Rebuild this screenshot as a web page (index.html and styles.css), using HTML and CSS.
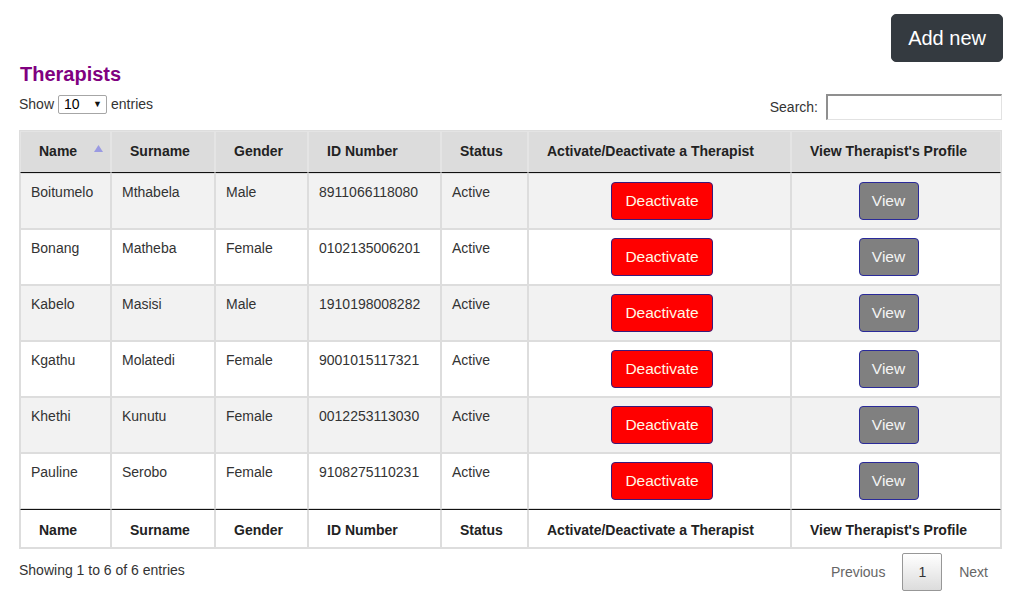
FILE: index.html
```html
<!DOCTYPE html>
<html lang="en">
<head>
<meta charset="utf-8">
<title>Therapists</title>
<link rel="stylesheet" href="styles.css">
</head>
<body>
<div class="page">
  <div class="topbar">
    <button class="btn-add">Add new</button>
  </div>
  <h2 class="title">Therapists</h2>
  <div class="controls">
    <div class="length">
      <span>Show</span>
      <span class="select"><span>10</span><span class="caret">&#9660;</span></span>
      <span>entries</span>
    </div>
    <div class="search">
      <label>Search:</label>
      <input type="text" class="search-input">
    </div>
  </div>
  <table class="grid">
    <colgroup>
      <col class="c1"><col class="c2"><col class="c3"><col class="c4"><col class="c5"><col class="c6"><col class="c7">
    </colgroup>
    <thead>
      <tr>
        <th class="sorted">Name<svg class="sort" width="9" height="8" viewBox="0 0 9 8"><polygon points="4.5,0 9,7 0,7" fill="#9a9ae2"/></svg></th>
        <th>Surname</th>
        <th>Gender</th>
        <th>ID Number</th>
        <th>Status</th>
        <th>Activate/Deactivate a Therapist</th>
        <th>View Therapist's Profile</th>
      </tr>
    </thead>
    <tbody>
      <tr class="odd"><td>Boitumelo</td><td>Mthabela</td><td>Male</td><td>8911066118080</td><td>Active</td><td class="act-d"><button class="btn-deact">Deactivate</button></td><td class="act-v"><button class="btn-view">View</button></td></tr>
      <tr><td>Bonang</td><td>Matheba</td><td>Female</td><td>0102135006201</td><td>Active</td><td class="act-d"><button class="btn-deact">Deactivate</button></td><td class="act-v"><button class="btn-view">View</button></td></tr>
      <tr class="odd"><td>Kabelo</td><td>Masisi</td><td>Male</td><td>1910198008282</td><td>Active</td><td class="act-d"><button class="btn-deact">Deactivate</button></td><td class="act-v"><button class="btn-view">View</button></td></tr>
      <tr><td>Kgathu</td><td>Molatedi</td><td>Female</td><td>9001015117321</td><td>Active</td><td class="act-d"><button class="btn-deact">Deactivate</button></td><td class="act-v"><button class="btn-view">View</button></td></tr>
      <tr class="odd"><td>Khethi</td><td>Kunutu</td><td>Female</td><td>0012253113030</td><td>Active</td><td class="act-d"><button class="btn-deact">Deactivate</button></td><td class="act-v"><button class="btn-view">View</button></td></tr>
      <tr><td>Pauline</td><td>Serobo</td><td>Female</td><td>9108275110231</td><td>Active</td><td class="act-d"><button class="btn-deact">Deactivate</button></td><td class="act-v"><button class="btn-view">View</button></td></tr>
    </tbody>
    <tfoot>
      <tr>
        <th>Name</th>
        <th>Surname</th>
        <th>Gender</th>
        <th>ID Number</th>
        <th>Status</th>
        <th>Activate/Deactivate a Therapist</th>
        <th>View Therapist's Profile</th>
      </tr>
    </tfoot>
  </table>
  <div class="bottom">
    <div class="info">Showing 1 to 6 of 6 entries</div>
    <div class="paging">
      <span class="pg disabled">Previous</span>
      <span class="pg current">1</span>
      <span class="pg disabled">Next</span>
    </div>
  </div>
</div>
</body>
</html>
```

FILE: styles.css
```css
* { box-sizing: border-box; }
html, body { margin: 0; padding: 0; background: #fff; }
body {
  font-family: "Liberation Sans", Arial, sans-serif;
  font-size: 14px;
  color: #333;
}
.page {
  width: 984px;
  margin-left: 19px;
}
.topbar {
  display: flex;
  justify-content: flex-end;
  padding-top: 14px;
}
.btn-add {
  font-family: "Liberation Sans", Arial, sans-serif;
  font-size: 20px;
  line-height: 30px;
  padding: 8px 16px;
  background: #343a40;
  color: #fff;
  border: 1px solid #343a40;
  border-radius: 5px;
}
.title {
  margin: 0;
  font-size: 20px;
  line-height: 24px;
  font-weight: bold;
  color: #800080;
  padding-left: 1px;
}
.controls {
  display: flex;
  justify-content: space-between;
  align-items: flex-start;
  height: 44px;
}
.length {
  display: flex;
  align-items: center;
  gap: 4px;
  margin-top: 9px;
  line-height: 19px;
}
.select {
  display: inline-flex;
  align-items: center;
  justify-content: space-between;
  width: 49px;
  height: 19px;
  border: 1px solid #a6a6a6;
  border-radius: 2px;
  padding: 0 4px 0 5px;
  color: #000;
  background: #fff;
}
.caret { font-size: 9px; color: #111; }
.search {
  display: flex;
  align-items: center;
  gap: 8px;
  margin-top: 8px;
  margin-right: 1px;
}
.search-input {
  width: 176px;
  height: 26px;
  border-style: solid;
  border-width: 2px 1px 1px 2px;
  border-color: #8f8f8f #e2e2e2 #e2e2e2 #8f8f8f;
  background: #fff;
  padding: 2px 4px;
  font: 14px "Liberation Sans", Arial, sans-serif;
}
.grid {
  width: 983px;
  table-layout: fixed;
  border-collapse: separate;
  border-spacing: 0;
  border: 1px solid #dddddd;
}
.c1 { width: 91px; }
.c2 { width: 104px; }
.c3 { width: 93px; }
.c4 { width: 133px; }
.c5 { width: 87px; }
.c6 { width: 263px; }
.c7 { width: 210px; }
.grid th {
  font-weight: bold;
  color: #222;
  text-align: left;
  padding: 9px 18px 11px;
  line-height: 20px;
  border: 1px solid #dddddd;
  white-space: nowrap;
}
.grid thead th {
  background: #dcdcdc;
  border-color: #e4e4e4;
  border-bottom: 1px solid #111;
  position: relative;
}
.grid tfoot th {
  background: #fff;
  border-top: 1px solid #111;
  padding: 10px 18px 7px;
}
.grid td {
  border: 1px solid #dddddd;
  padding: 8px 10px;
  line-height: 20px;
  vertical-align: top;
  white-space: nowrap;
}
.grid tbody tr { background: #fff; }
.grid tbody tr.odd { background: #f2f2f2; }
.grid td.act-d { text-align: center; padding: 8px 10px 8px 15px; }
.grid td.act-v { text-align: center; padding: 8px 25px 8px 10px; }
.sort {
  position: absolute;
  right: 7px;
  top: 13px;
}
.btn-deact, .btn-view {
  font-family: "Liberation Sans", Arial, sans-serif;
  font-size: 15.5px;
  height: 38px;
  padding: 0 12px;
  border-radius: 4px;
  vertical-align: top;
}
.btn-deact {
  width: 102px;
  background: #ff0000;
  color: #fff8e6;
  border: 1px solid #3a1a7a;
}
.btn-view {
  width: 60px;
  background: #808080;
  color: #f4f4f4;
  border: 1px solid #2a2a9a;
}
.bottom {
  display: flex;
  justify-content: space-between;
  align-items: flex-start;
}
.info {
  padding-top: 11px;
  line-height: 20px;
}
.paging {
  display: flex;
  padding-top: 4px;
}
.pg {
  display: inline-block;
  padding: 8px 14px;
  line-height: 20px;
  margin-left: 2px;
  border: 1px solid transparent;
  border-radius: 2px;
}
.pg.disabled { color: #666; }
.pg.current {
  color: #333;
  border: 1px solid #979797;
  background: linear-gradient(to bottom, #ffffff 0%, #dcdcdc 100%);
  padding: 8px 15px;
}
```
